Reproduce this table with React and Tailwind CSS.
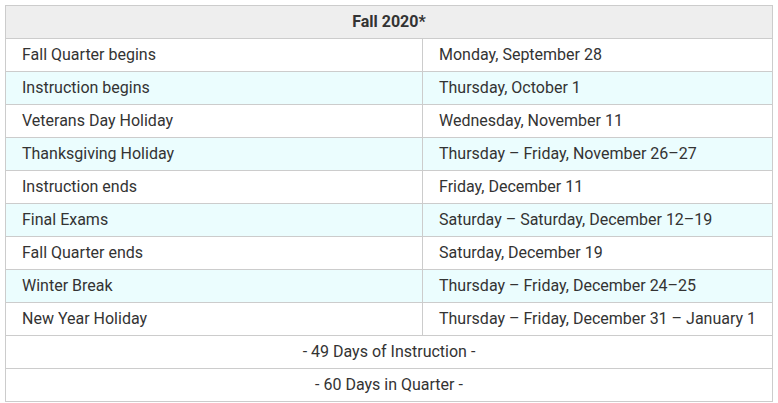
const rows = [
  ["Fall Quarter begins", "Monday, September 28"],
  ["Instruction begins", "Thursday, October 1"],
  ["Veterans Day Holiday", "Wednesday, November 11"],
  ["Thanksgiving Holiday", "Thursday – Friday, November 26–27"],
  ["Instruction ends", "Friday, December 11"],
  ["Final Exams", "Saturday – Saturday, December 12–19"],
  ["Fall Quarter ends", "Saturday, December 19"],
  ["Winter Break", "Thursday – Friday, December 24–25"],
  ["New Year Holiday", "Thursday – Friday, December 31 – January 1"],
];

export default function App() {
  return (
    <div
      className="bg-white pt-[5px] pl-[5px] text-[16px] text-[#333]"
      style={{ fontFamily: "Roboto, 'Liberation Sans', sans-serif" }}
    >
      <table className="w-[768px] border-collapse table-fixed">
        <colgroup>
          <col className="w-[417px]" />
          <col />
        </colgroup>
        <thead>
          <tr className="h-[33px] bg-[#eeeeee]">
            <th colSpan={2} className="border border-[#cccccc] p-0 text-center font-bold">
              Fall 2020*
            </th>
          </tr>
        </thead>
        <tbody>
          {rows.map(([label, date], i) => (
            <tr key={label} className={i % 2 === 1 ? "h-[33px] bg-[#ebfdfe]" : "h-[33px] bg-white"}>
              <td className="border border-[#cccccc] py-0 pl-[16px]">{label}</td>
              <td className="border border-[#cccccc] py-0 pl-[16px]">{date}</td>
            </tr>
          ))}
          <tr className="h-[33px]">
            <td colSpan={2} className="border border-[#cccccc] p-0 text-center">
              - 49 Days of Instruction -
            </td>
          </tr>
          <tr className="h-[33px]">
            <td colSpan={2} className="border border-[#cccccc] p-0 text-center">
              - 60 Days in Quarter -
            </td>
          </tr>
        </tbody>
      </table>
    </div>
  );
}
